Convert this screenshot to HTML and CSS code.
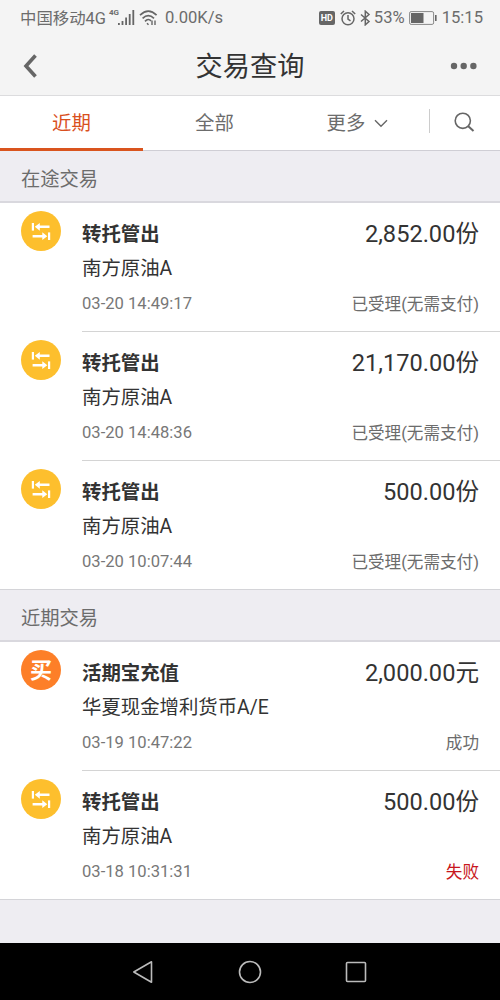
FILE: index.html
```html
<!DOCTYPE html>
<html lang="zh-CN">
<head>
    <meta charset="UTF-8">
    <meta name="viewport" content="width=device-width, initial-scale=1.0">
    <title>交易查询</title>
    <link rel="stylesheet" href="styles.css">
</head>
<body>

<!-- Общие символы иконок -->
<svg class="sprite" width="0" height="0">
    <symbol id="transfer" viewBox="0 0 40 40">
        <g fill="#fff">
            <rect x="10.800" y="12" width="2.200" height="7.600"/>
            <path d="M13.800 15.800l5-3.900v2.700h9.700v2.400h-9.700v2.700z"/>
            <rect x="27" y="21.400" width="2.200" height="7.600"/>
            <path d="M26.300 25.200l-5-3.900v2.700h-9.700v2.400h9.700v2.700z"/>
        </g>
    </symbol>
</svg>

<div class="status-bar">
    <span class="carrier">中国移动4G</span>
    <span class="net">4G</span>
    <svg class="signal" width="17" height="16" viewBox="0 0 17 16" fill="#666">
        <rect x="0" y="13" width="1.800" height="2"/>
        <rect x="3.600" y="11" width="1.800" height="4"/>
        <rect x="7.200" y="7.500" width="1.800" height="7.500"/>
        <rect x="10.800" y="4" width="1.800" height="11"/>
        <rect x="14.400" y="0" width="1.800" height="15"/>
    </svg>
    <svg class="wifi" width="19" height="16" viewBox="0 0 19 16" fill="none" stroke="#666" stroke-width="1.7">
        <path d="M1 5.2Q9.300-2.800 17.600 5.200"/>
        <path d="M3.600 8.300Q9.300 2.800 15 8.300"/>
        <path d="M6 11.300Q9.300 8 12 10.800"/>
        <path d="M8 13.200L9.500 14.800M13 10.500V15M16 10.500V15" stroke-width="1.400"/>
    </svg>
    <span class="speed">0.00K/s</span>
    <div class="status-right">
        <span class="hd">HD</span>
        <svg class="alarm" width="16" height="16" viewBox="0 0 16 16" fill="none" stroke="#666" stroke-width="1.500">
            <circle cx="8" cy="8.700" r="6"/>
            <path d="M8 5v4l2.500 1.800M.8 4L4 1M15.200 4L12 1"/>
        </svg>
        <svg class="bluetooth" width="11" height="16" viewBox="0 0 11 16" fill="none" stroke="#666" stroke-width="1.500">
            <path d="M1 4.500l8 7L5.300 14.800V1.200L9 4.500l-8 7"/>
        </svg>
        <span>53%</span>
        <svg class="battery" width="28" height="14" viewBox="0 0 28 14">
            <rect x=".6" y=".6" width="24" height="12.800" rx="1.500" fill="none" stroke="#888" stroke-width="1"/>
            <rect x="2" y="2" width="12.500" height="10" fill="#666"/>
            <rect x="26" y="4" width="1.600" height="6" fill="#666"/>
        </svg>
        <span>15:15</span>
    </div>
</div>

<div class="header">
    <svg width="16" height="26" viewBox="0 0 16 26" fill="none" stroke="#666" stroke-width="3.600">
        <path d="M13.500 2.500L4 13l9.500 10.500"/>
    </svg>
    <h1>交易查询</h1>
    <svg width="28" height="8" viewBox="0 0 28 8" fill="#666">
        <circle cx="4" cy="4" r="3.200"/>
        <circle cx="13.700" cy="4" r="3.200"/>
        <circle cx="23.400" cy="4" r="3.200"/>
    </svg>
</div>

<div class="tabs">
    <div class="tab active">近期</div>
    <div class="tab">全部</div>
    <div class="tab">更多
        <svg width="14" height="9" viewBox="0 0 14 9" fill="none" stroke="#666" stroke-width="1.400">
            <path d="M1 1.200l6 6 6-6"/>
        </svg>
    </div>
    <div class="search">
        <svg width="21" height="21" viewBox="0 0 21 21" fill="none" stroke="#666" stroke-width="1.600">
            <circle cx="8.800" cy="8.800" r="7.600"/>
            <path d="M14 14l5.500 5" stroke-width="2"/>
        </svg>
    </div>
</div>

<div class="section">在途交易</div>
<div class="list">
    <div class="item">
        <svg class="icon"><use href="#transfer"/></svg>
        <div class="info">
            <div class="line"><b>转托管出</b><span class="amount">2,852.00份</span></div>
            <div class="fund">南方原油A</div>
            <div class="line small"><span class="time">03-20 14:49:17</span><span class="state">已受理(无需支付)</span></div>
        </div>
    </div>
    <div class="item">
        <svg class="icon"><use href="#transfer"/></svg>
        <div class="info">
            <div class="line"><b>转托管出</b><span class="amount">21,170.00份</span></div>
            <div class="fund">南方原油A</div>
            <div class="line small"><span class="time">03-20 14:48:36</span><span class="state">已受理(无需支付)</span></div>
        </div>
    </div>
    <div class="item">
        <svg class="icon"><use href="#transfer"/></svg>
        <div class="info">
            <div class="line"><b>转托管出</b><span class="amount">500.00份</span></div>
            <div class="fund">南方原油A</div>
            <div class="line small"><span class="time">03-20 10:07:44</span><span class="state">已受理(无需支付)</span></div>
        </div>
    </div>
</div>

<div class="section second">近期交易</div>
<div class="list">
    <div class="item">
        <div class="icon buy">买</div>
        <div class="info">
            <div class="line"><b>活期宝充值</b><span class="amount">2,000.00元</span></div>
            <div class="fund">华夏现金增利货币A/E</div>
            <div class="line small"><span class="time">03-19 10:47:22</span><span class="state">成功</span></div>
        </div>
    </div>
    <div class="item">
        <svg class="icon"><use href="#transfer"/></svg>
        <div class="info">
            <div class="line"><b>转托管出</b><span class="amount">500.00份</span></div>
            <div class="fund">南方原油A</div>
            <div class="line small"><span class="time">03-18 10:31:31</span><span class="state fail">失败</span></div>
        </div>
    </div>
</div>

<div class="nav-bar">
    <svg width="22" height="24" viewBox="0 0 22 24"><path d="M19.500 1.800v20.400L1.800 12z"/></svg>
    <svg width="24" height="24" viewBox="0 0 24 24"><circle cx="12" cy="12" r="10.500"/></svg>
    <svg width="22" height="22" viewBox="0 0 22 22"><rect x="1.500" y="1.500" width="19" height="19" rx="1"/></svg>
</div>

</body>
</html>
```
FILE: styles.css
```css
* {
    box-sizing: border-box;
}
body {
    font-family: Roboto, "Noto Sans CJK SC", sans-serif;
    margin: 0;
    height: 1000px;
    display: flex;
    flex-direction: column;
    background: #eeedf2;
    color: #333;
    overflow: hidden;
}
svg {
    flex-shrink: 0;
}
.sprite {
    position: absolute;
}
.status-bar {
    height: 36px;
    padding: 0 17px 0 20px;
    display: flex;
    align-items: center;
    background: #f4f4f4;
    color: #6c6c6c;
    font-size: 16.6px;
    line-height: 34px;
    white-space: nowrap;
}
.carrier {
    font-size: 16.4px;
    padding-top: 1px;
}
.net {
    font-size: 8px;
    font-weight: bold;
    line-height: 10px;
    margin: -10px 0 0 3px;
}
.signal {
    margin-left: -1px;
}
.wifi {
    margin: 0 7px 0 4px;
}
.status-right {
    margin-left: auto;
    display: flex;
    align-items: center;
}
.hd {
    width: 16px;
    height: 14px;
    border-radius: 2px;
    background: #666;
    color: #fff;
    font-size: 9px;
    font-weight: bold;
    line-height: 14px;
    text-align: center;
}
.alarm {
    margin: 0 4px 0 5px;
}
.bluetooth {
    margin-right: 3px;
}
.battery {
    margin: 0 5px 0 4px;
}
.header {
    height: 60px;
    padding: 0 22px;
    display: flex;
    align-items: center;
    justify-content: space-between;
    background: #f4f4f4;
    border-bottom: 1px solid #dcdcde;
}
.header h1 {
    margin: 0 0 0 12px;
    padding-top: 2px;
    font-size: 27.2px;
    font-weight: normal;
    line-height: 40px;
}
.tabs {
    height: 55px;
    display: flex;
    background: #fff;
    border-bottom: 1px solid #cfced5;
}
.tab {
    width: 143px;
    height: 55px;
    display: flex;
    align-items: center;
    justify-content: center;
    gap: 9px;
    color: #6c6c6c;
    font-size: 19.4px;
    line-height: 54px;
}
.tab.active {
    padding-top: 3px;
    color: #d9501e;
    border-bottom: 3px solid #d9541e;
}
.search {
    flex: 1;
    height: 24px;
    margin-top: 13px;
    padding: 3px 0 0 24px;
    border-left: 1px solid #ccc;
}
.section {
    height: 52px;
    padding-left: 21px;
    border-bottom: 2px solid #d9d8de;
    color: #6c6c6c;
    font-size: 19.3px;
    line-height: 58px;
}
.second {
    height: 53px;
    border-top: 1px solid #d4d4d8;
}
.list {
    background: #fff;
}
.item {
    display: flex;
    padding-left: 21px;
}
.icon {
    width: 40px;
    height: 40px;
    margin: 8px 21px 0 0;
    border-radius: 50%;
    background: #fdbf2d;
}
.buy {
    flex-shrink: 0;
    background: #fd7f28;
    color: #fff;
    font-size: 22px;
    font-weight: bold;
    line-height: 41px;
    text-align: center;
}
.info {
    flex: 1;
    height: 129px;
    padding: 12px 21px 0 0;
    border-bottom: 1px solid #d4d4d4;
}
.item:last-child .info {
    height: 128px;
    border-bottom: none;
}
.line {
    height: 36px;
    display: flex;
    justify-content: space-between;
    line-height: 36px;
}
.line b {
    padding-top: 2px;
    font-size: 19.4px;
}
.amount {
    padding-top: 1px;
    font-size: 23.6px;
}
.fund {
    height: 35px;
    font-size: 19.4px;
    line-height: 36px;
}
.small {
    height: 35px;
    color: #777;
    font-size: 16.6px;
    line-height: 35px;
}
.state {
    padding-top: 1px;
    color: #6c6c6c;
}
.fail {
    color: #c8161d;
}
.list:nth-last-child(2) {
    border-bottom: 1px solid #d4d4d8;
}
.nav-bar {
    height: 57px;
    margin-top: auto;
    padding: 0 133px 0 132px;
    display: flex;
    align-items: center;
    justify-content: space-between;
    background: #000;
}
.nav-bar svg {
    fill: none;
    stroke: #bbb;
    stroke-width: 1.6;
    stroke-linejoin: round;
}
```
